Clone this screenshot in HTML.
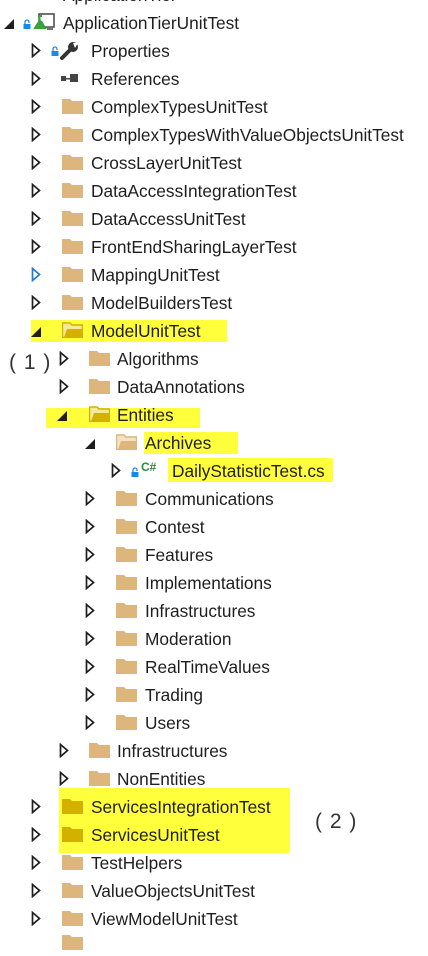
<!DOCTYPE html>
<html><head><meta charset="utf-8"><style>
body{margin:0;width:428px;height:936px;overflow:hidden;background:#fff;position:relative;font-family:"Liberation Sans",sans-serif;color:#1e1e1e}
.r{position:absolute;left:0;width:428px;height:28px}
.t{position:absolute;top:1px;line-height:28px;font-size:17.3px;white-space:nowrap}
.a,.e{position:absolute;top:7px;width:10px;height:15px}
.f{position:absolute;top:6px;width:21px;height:16px}
.lk{position:absolute;width:8px;height:10px}
.hl{position:absolute;background:#ffff3b}
.lbl{position:absolute;font-size:21px;color:#333;letter-spacing:1px}
</style></head><body>
<svg width="0" height="0" style="position:absolute">
<defs>
<symbol id="ar" viewBox="0 0 10 15"><path d="M1.5 1.5 L8.5 7.5 L1.5 13.5 Z" fill="none" stroke="#1e1e1e" stroke-width="1.7"/></symbol>
<symbol id="arb" viewBox="0 0 10 15"><path d="M1.5 1.5 L8.5 7.5 L1.5 13.5 Z" fill="none" stroke="#1e7ad6" stroke-width="1.7"/></symbol>
<symbol id="ex" viewBox="0 0 10 15"><path d="M10 4 L10 14 L0 14 Z" fill="#1e1e1e"/></symbol>
<symbol id="fo" viewBox="0 0 21 16"><path d="M0 1 H8 L10 3 H21 V16 H0 Z" fill="#dcb67a"/></symbol>
<symbol id="fy" viewBox="0 0 21 16"><path d="M0 1 H8 L10 3 H21 V16 H0 Z" fill="#d4b000"/></symbol>
<symbol id="fopen" viewBox="0 0 21 16"><path d="M0.5 15.5 V1 H8 L10 3 H20.5 V15.5 Z" fill="#f3e3c4" stroke="#dcb67a" stroke-width="1.4"/><path d="M2 15.5 L5 7 H20.5 V15.5 Z" fill="#dcb67a"/></symbol>
<symbol id="fopeny" viewBox="0 0 21 16"><path d="M0.5 15.5 V1 H8 L10 3 H20.5 V15.5 Z" fill="#f2ea9a" stroke="#d4b000" stroke-width="1.4"/><path d="M2 15.5 L5 7 H20.5 V15.5 Z" fill="#d4b000"/></symbol>
<symbol id="lock" viewBox="0 0 8 10"><path d="M2 5 V3 A2 2 0 0 1 6 3 V4" fill="none" stroke="#1e88e5" stroke-width="1.3"/><rect x="0.5" y="5" width="7" height="5" fill="#1e88e5"/></symbol>
</defs></svg>

<div class="hl" style="left:31px;top:320px;width:196px;height:22px"></div>
<div class="hl" style="left:46px;top:408px;width:154px;height:20px"></div>
<div class="hl" style="left:144px;top:432px;width:94px;height:22px"></div>
<div class="hl" style="left:168px;top:458px;width:165px;height:24px"></div>
<div class="hl" style="left:59px;top:788px;width:231px;height:65px"></div>

<div class="r" style="top:-20px"><svg style="position:absolute;left:36px;top:10px" width="18" height="10" viewBox="0 0 18 10"><rect x="1" y="0" width="16" height="8" fill="none" stroke="#3a8a3a" stroke-width="1.5"/></svg><span class="t" style="left:63px">ApplicationTier</span></div>

<div class="r" style="top:8px"><svg class="e" style="left:4px"><use href="#ex"/></svg>
<svg class="lk" style="left:23px;top:11px"><use href="#lock"/></svg>
<svg style="position:absolute;left:33px;top:5px" width="22" height="18" viewBox="0 0 22 18"><rect x="6" y="1" width="15" height="13" fill="none" stroke="#444" stroke-width="1.5"/><path d="M5 3 H9 M6.5 3 V8 L2 15 H12 L8 8" fill="#3ca03c" stroke="#3ca03c" stroke-width="2"/><path d="M14 16 H20" stroke="#444" stroke-width="1.5"/></svg>
<span class="t" style="left:63px">ApplicationTierUnitTest</span></div>

<div class="r" style="top:36px"><svg class="a" style="left:31px"><use href="#ar"/></svg>
<svg class="lk" style="left:51px;top:10px"><use href="#lock"/></svg>
<svg style="position:absolute;left:60px;top:6px" width="20" height="18" viewBox="0 0 20 18"><path d="M2 16 L10 8" stroke="#333" stroke-width="4" stroke-linecap="round"/><circle cx="13" cy="5" r="5" fill="#333"/><path d="M13 1 L18 1 L15 6 Z" fill="#fff"/></svg>
<span class="t" style="left:91px">Properties</span></div>

<div class="r" style="top:64px"><svg class="a" style="left:31px"><use href="#ar"/></svg>
<svg style="position:absolute;left:60px;top:9px" width="20" height="10" viewBox="0 0 20 10"><rect x="1" y="3" width="5" height="5" fill="#444"/><rect x="6" y="5" width="4" height="1.5" fill="#444"/><rect x="10" y="1" width="8" height="8" fill="#444"/></svg>
<span class="t" style="left:91px">References</span></div>

<div class="r" style="top:92px"><svg class="a" style="left:31px"><use href="#ar"/></svg><svg class="f" style="left:62px"><use href="#fo"/></svg><span class="t" style="left:91px">ComplexTypesUnitTest</span></div>
<div class="r" style="top:120px"><svg class="a" style="left:31px"><use href="#ar"/></svg><svg class="f" style="left:62px"><use href="#fo"/></svg><span class="t" style="left:91px">ComplexTypesWithValueObjectsUnitTest</span></div>
<div class="r" style="top:148px"><svg class="a" style="left:31px"><use href="#ar"/></svg><svg class="f" style="left:62px"><use href="#fo"/></svg><span class="t" style="left:91px">CrossLayerUnitTest</span></div>
<div class="r" style="top:176px"><svg class="a" style="left:31px"><use href="#ar"/></svg><svg class="f" style="left:62px"><use href="#fo"/></svg><span class="t" style="left:91px">DataAccessIntegrationTest</span></div>
<div class="r" style="top:204px"><svg class="a" style="left:31px"><use href="#ar"/></svg><svg class="f" style="left:62px"><use href="#fo"/></svg><span class="t" style="left:91px">DataAccessUnitTest</span></div>
<div class="r" style="top:232px"><svg class="a" style="left:31px"><use href="#ar"/></svg><svg class="f" style="left:62px"><use href="#fo"/></svg><span class="t" style="left:91px">FrontEndSharingLayerTest</span></div>
<div class="r" style="top:260px"><svg class="a" style="left:31px"><use href="#arb"/></svg><svg class="f" style="left:62px"><use href="#fo"/></svg><span class="t" style="left:91px">MappingUnitTest</span></div>
<div class="r" style="top:288px"><svg class="a" style="left:31px"><use href="#ar"/></svg><svg class="f" style="left:62px"><use href="#fo"/></svg><span class="t" style="left:91px">ModelBuildersTest</span></div>
<div class="r" style="top:316px"><svg class="e" style="left:31px"><use href="#ex"/></svg><svg class="f" style="left:62px"><use href="#fopeny"/></svg><span class="t" style="left:91px">ModelUnitTest</span></div>

<div class="r" style="top:344px"><svg class="a" style="left:59px"><use href="#ar"/></svg><svg class="f" style="left:89px"><use href="#fo"/></svg><span class="t" style="left:117px">Algorithms</span></div>
<div class="r" style="top:372px"><svg class="a" style="left:59px"><use href="#ar"/></svg><svg class="f" style="left:89px"><use href="#fo"/></svg><span class="t" style="left:117px">DataAnnotations</span></div>
<div class="r" style="top:400px"><svg class="e" style="left:57px"><use href="#ex"/></svg><svg class="f" style="left:89px"><use href="#fopeny"/></svg><span class="t" style="left:117px">Entities</span></div>
<div class="r" style="top:428px"><svg class="e" style="left:85px"><use href="#ex"/></svg><svg class="f" style="left:116px"><use href="#fopen"/></svg><span class="t" style="left:145px">Archives</span></div>
<div class="r" style="top:456px"><svg class="a" style="left:111px"><use href="#ar"/></svg>
<svg class="lk" style="left:131px;top:11px"><use href="#lock"/></svg>
<span style="position:absolute;left:141px;top:4px;font-size:12px;font-weight:bold;color:#2e8b3a">C#</span>
<span class="t" style="left:172px">DailyStatisticTest.cs</span></div>
<div class="r" style="top:484px"><svg class="a" style="left:85px"><use href="#ar"/></svg><svg class="f" style="left:116px"><use href="#fo"/></svg><span class="t" style="left:145px">Communications</span></div>
<div class="r" style="top:512px"><svg class="a" style="left:85px"><use href="#ar"/></svg><svg class="f" style="left:116px"><use href="#fo"/></svg><span class="t" style="left:145px">Contest</span></div>
<div class="r" style="top:540px"><svg class="a" style="left:85px"><use href="#ar"/></svg><svg class="f" style="left:116px"><use href="#fo"/></svg><span class="t" style="left:145px">Features</span></div>
<div class="r" style="top:568px"><svg class="a" style="left:85px"><use href="#ar"/></svg><svg class="f" style="left:116px"><use href="#fo"/></svg><span class="t" style="left:145px">Implementations</span></div>
<div class="r" style="top:596px"><svg class="a" style="left:85px"><use href="#ar"/></svg><svg class="f" style="left:116px"><use href="#fo"/></svg><span class="t" style="left:145px">Infrastructures</span></div>
<div class="r" style="top:624px"><svg class="a" style="left:85px"><use href="#ar"/></svg><svg class="f" style="left:116px"><use href="#fo"/></svg><span class="t" style="left:145px">Moderation</span></div>
<div class="r" style="top:652px"><svg class="a" style="left:85px"><use href="#ar"/></svg><svg class="f" style="left:116px"><use href="#fo"/></svg><span class="t" style="left:145px">RealTimeValues</span></div>
<div class="r" style="top:680px"><svg class="a" style="left:85px"><use href="#ar"/></svg><svg class="f" style="left:116px"><use href="#fo"/></svg><span class="t" style="left:145px">Trading</span></div>
<div class="r" style="top:708px"><svg class="a" style="left:85px"><use href="#ar"/></svg><svg class="f" style="left:116px"><use href="#fo"/></svg><span class="t" style="left:145px">Users</span></div>
<div class="r" style="top:736px"><svg class="a" style="left:59px"><use href="#ar"/></svg><svg class="f" style="left:89px"><use href="#fo"/></svg><span class="t" style="left:117px">Infrastructures</span></div>
<div class="r" style="top:764px"><svg class="a" style="left:59px"><use href="#ar"/></svg><svg class="f" style="left:89px"><use href="#fo"/></svg><span class="t" style="left:117px">NonEntities</span></div>

<div class="r" style="top:792px"><svg class="a" style="left:31px"><use href="#ar"/></svg><svg class="f" style="left:62px"><use href="#fy"/></svg><span class="t" style="left:91px">ServicesIntegrationTest</span></div>
<div class="r" style="top:820px"><svg class="a" style="left:31px"><use href="#ar"/></svg><svg class="f" style="left:62px"><use href="#fy"/></svg><span class="t" style="left:91px">ServicesUnitTest</span></div>
<div class="r" style="top:848px"><svg class="a" style="left:31px"><use href="#ar"/></svg><svg class="f" style="left:62px"><use href="#fo"/></svg><span class="t" style="left:91px">TestHelpers</span></div>
<div class="r" style="top:876px"><svg class="a" style="left:31px"><use href="#ar"/></svg><svg class="f" style="left:62px"><use href="#fo"/></svg><span class="t" style="left:91px">ValueObjectsUnitTest</span></div>
<div class="r" style="top:904px"><svg class="a" style="left:31px"><use href="#ar"/></svg><svg class="f" style="left:62px"><use href="#fo"/></svg><span class="t" style="left:91px">ViewModelUnitTest</span></div>
<div class="r" style="top:928px"><svg class="f" style="left:62px"><use href="#fo"/></svg></div>

<div class="lbl" style="left:9px;top:351px">( 1 )</div>
<div class="lbl" style="left:315px;top:810px">( 2 )</div>
</body></html>
